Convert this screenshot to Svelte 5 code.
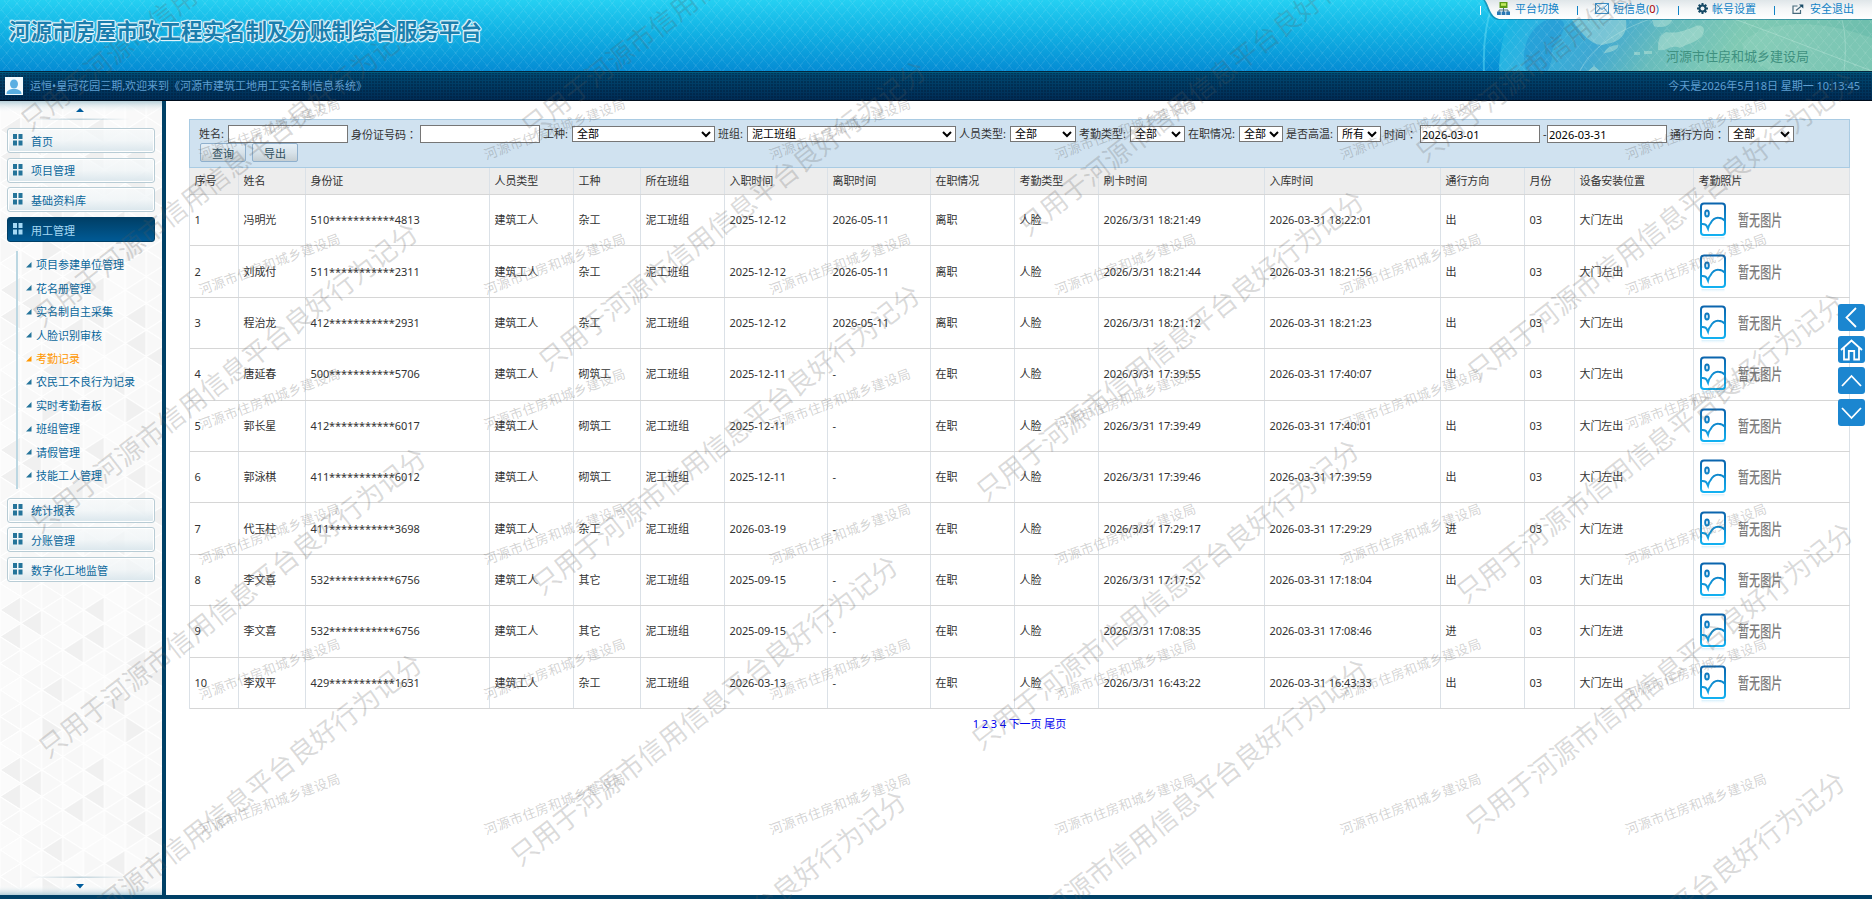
<script lang="ts">
  type Field = { label: string; lw: number; type: 'input' | 'select'; w: number; value: string };

  const title = '河源市房屋市政工程实名制及分账制综合服务平台';
  const bureau = '河源市住房和城乡建设局';
  const notice = '只用于河源市信用信息平台良好行为记分';

  let current = $state('考勤记录');

  const menuTop = ['首页', '项目管理', '基础资料库', '用工管理'];
  const menuBottom = ['统计报表', '分账管理', '数字化工地监管'];
  const subMenu = [
    '项目参建单位管理', '花名册管理', '实名制自主采集', '人脸识别审核', '考勤记录',
    '农民工不良行为记录', '实时考勤看板', '班组管理', '请假管理', '技能工人管理'
  ];

  const fields: Field[] = [
    { label: '姓名:', lw: 29, type: 'input', w: 120, value: '' },
    { label: '身份证号码：', lw: 69, type: 'input', w: 120, value: '' },
    { label: '工种:', lw: 29, type: 'select', w: 143, value: '全部' },
    { label: '班组:', lw: 29, type: 'select', w: 209, value: '泥工班组' },
    { label: '人员类型:', lw: 51, type: 'select', w: 66, value: '全部' },
    { label: '考勤类型:', lw: 51, type: 'select', w: 55, value: '全部' },
    { label: '在职情况:', lw: 51, type: 'select', w: 44, value: '全部' },
    { label: '是否高温:', lw: 51, type: 'select', w: 44, value: '所有' },
    { label: '时间：', lw: 36, type: 'input', w: 120, value: '2026-03-01' },
    { label: '-', lw: 4, type: 'input', w: 120, value: '2026-03-31' },
    { label: '通行方向：', lw: 58, type: 'select', w: 66, value: '全部' }
  ];

  const columns = [
    '序号', '姓名', '身份证', '人员类型', '工种', '所在班组', '入职时间', '离职时间', '在职情况',
    '考勤类型', '刷卡时间', '入库时间', '通行方向', '月份', '设备安装位置', '考勤照片'
  ];

  // 姓名, 证件前三位, 后四位, 工种, 入职, 离职, 刷卡, 入库, 方向
  const source = [
    ['冯明光', '510', '4813', '杂工', '2025-12-12', '2026-05-11', '18:21:49', '18:22:01', '出'],
    ['刘成付', '511', '2311', '杂工', '2025-12-12', '2026-05-11', '18:21:44', '18:21:56', '出'],
    ['程治龙', '412', '2931', '杂工', '2025-12-12', '2026-05-11', '18:21:12', '18:21:23', '出'],
    ['唐延春', '500', '5706', '砌筑工', '2025-12-11', '-', '17:39:55', '17:40:07', '出'],
    ['郭长星', '412', '6017', '砌筑工', '2025-12-11', '-', '17:39:49', '17:40:01', '出'],
    ['郭泳棋', '411', '6012', '砌筑工', '2025-12-11', '-', '17:39:46', '17:39:59', '出'],
    ['代玉柱', '411', '3698', '杂工', '2026-03-19', '-', '17:29:17', '17:29:29', '进'],
    ['李文喜', '532', '6756', '其它', '2025-09-15', '-', '17:17:52', '17:18:04', '出'],
    ['李文喜', '532', '6756', '其它', '2025-09-15', '-', '17:08:35', '17:08:46', '进'],
    ['李双平', '429', '1631', '杂工', '2026-03-13', '-', '16:43:22', '16:43:33', '出']
  ];

  const rows = source.map(([name, head, tail, job, joined, left, swipe, saved, dir], i) => [
    String(i + 1), name, head + '*'.repeat(11) + tail, '建筑工人', job, '泥工班组', joined, left,
    left === '-' ? '在职' : '离职', '人脸', '2026/3/31 ' + swipe, '2026-03-31 ' + saved, dir, '03', '大门左' + dir
  ]);

  // 大号水印的位置是错开的
  const notices = [
    [19, 134], [31, 330], [29, 536], [37, 761], [33, 967],
    [520, 140], [537, 374], [531, 598], [509, 869], [517, 1104],
    [1017, 239], [975, 504], [970, 753], [979, 972],
    [1414, 165], [1466, 385], [1455, 606], [1464, 836], [1456, 1085]
  ];

  const stamps: number[][] = [];
  for (let r = 0; r < 6; r++) {
    for (let c = 0; c < 6; c++) stamps.push([198 + c * 285.3, 162 + r * 135]);
  }

  // 侧栏背景三角形
  const TW = 20.9;
  const TH = 26.67;
  const darkOnes = ['0-0', '1-1', '4-0', '0-2', '4-2', '6-2', '3-3', '6-4', '2-9', '5-7', '7-5', '2-6', '6-9'];
  const triangles: { points: string; fill: string }[] = [];
  for (let i = 0; i < 8; i++) {
    for (let j = -1; j < 13; j++) {
      const x = i * TW;
      const y = (j * TH) / 2;
      const pointsLeft = (i + j) % 2 === 0;
      const k = (j + 12) % 12;
      const points = pointsLeft
        ? `${x},${y} ${x + TW},${y - TH / 2} ${x + TW},${y + TH / 2}`
        : `${x + TW},${y} ${x},${y - TH / 2} ${x},${y + TH / 2}`;
      const light = ['#fafafa', '#f9f9f9', '#f7f7f7', '#fbfbfb', '#f8f8f8'][(i * 7 + k * 3 + i * k) % 5];
      triangles.push({ points, fill: darkOnes.includes(`${i}-${k}`) ? '#f0f0f0' : light });
    }
  }
</script>

{#snippet menuButton(text: string)}
  <button class="menu-btn" class:open={text === '用工管理'}>
    <svg width="10" height="12" viewBox="0 0 10 12">
      <path d="M0 0h4v5H0zM5.5 0h4v5h-4zM0 6.5h4v5H0zM5.5 6.5h4v5h-4z" fill="currentColor" />
    </svg>
    {text}
  </button>
{/snippet}

<div class="page">
  <header>
    <h1>{title}</h1>
    <svg class="globe" width="392" height="71" viewBox="0 0 392 71">
      <defs>
        <linearGradient id="sea" x1="0" y1="0" x2="1" y2="0.12">
          <stop offset="0" stop-color="#12b4e2" stop-opacity="0" />
          <stop offset="0.06" stop-color="#18b6e4" />
          <stop offset="0.16" stop-color="#32b2e0" />
          <stop offset="0.33" stop-color="#3fa8d2" />
          <stop offset="0.5" stop-color="#68bcbc" />
          <stop offset="0.7" stop-color="#80cab4" />
          <stop offset="1" stop-color="#6fbfae" />
        </linearGradient>
        <radialGradient id="shine" cx="0.22" cy="0" r="0.3">
          <stop offset="0" stop-color="#c4f4fb" stop-opacity="0.75" />
          <stop offset="1" stop-color="#c4f4fb" stop-opacity="0" />
        </radialGradient>
      </defs>
      <path d="M19 71C19 45 28 20 36 0h356v71z" fill="url(#sea)" />
      <path d="M19 71C19 45 28 20 40 0h352v71z" fill="url(#shine)" />
      <path d="M4 71C3 45 6 20 14 0" fill="none" stroke="#5fdcf4" stroke-opacity="0.5" stroke-width="2" />
      <path d="M46 71c-6-22 2-40 18-50 14-4 22-2 20 8-6 14-14 18-12 30l-4 12z" fill="#1a8fd0" opacity="0.45" />
      <path d="M92 20h54c2 12-4 22-20 24-10 4-22-6-34-24zM124 53c2-5 8-8 14-8 2 4-8 8-14 8zM172 20h20c-2 8-14 8-18 6zM178 50c0-8 0-14 8-18 12 2 20-2 30-6 8-2 10 4 6 10-8 8-16 8-22 12-10-4-12 4-22 2zM154 52h6v3h-6zM164 51h8v3h-8zM114 66l6 5h-12z" fill="#c8ecdc" opacity="0.42" />
      <path d="M262 44c16-20 60-26 112-12l18 6v33H290c-10-8-26-14-28-27z" fill="#a4dcc6" opacity="0.25" />
      <path d="M362 20c4 14 4 34 2 51M100 71c14-30 60-60 160-71M200 0c60 20 110 40 192 71" fill="none" stroke="#d8f4ea" stroke-opacity="0.3" />
    </svg>
    <div class="mesh"></div>
    <span class="bureau">{bureau}</span>
    <div class="tools">
      <svg class="tab" width="391" height="22" viewBox="0 0 391 22">
        <defs>
          <linearGradient id="tab" x1="0" y1="0" x2="0" y2="1">
            <stop offset="0" stop-color="#dfe6e9" />
            <stop offset="0.45" stop-color="#f4f6f7" />
            <stop offset="1" stop-color="#ffffff" />
          </linearGradient>
        </defs>
        <path d="M2 0C6 4 7 18 17 20H391V0z" fill="#0b6f94" opacity="0.55" />
        <path d="M4 0C8 5 9 17 18 19H391V0z" fill="url(#tab)" />
      </svg>
      <i class="bar first"></i>
      <a href="#switch" class="t1">
        <svg width="13" height="13" viewBox="0 0 13 13">
          <path d="M2.5 0h8v6h-8z" fill="#5c9c14" /><path d="M4 1.2h5v2.6H4z" fill="#c2e860" />
          <path d="M6.5 6v4M2 10V8h9v2" stroke="#47717f" fill="none" />
          <path d="M0 9.5h3.8V13H0zM4.6 9.5h3.8V13H4.6zM9.2 9.5H13V13H9.2z" fill="#2a78b4" />
        </svg>平台切换</a>
      <i class="bar"></i>
      <a href="#message" class="t2">
        <svg width="14" height="11" viewBox="0 0 14 11" fill="none" stroke="#3c8fc6">
          <rect x="0.5" y="0.5" width="13" height="10" fill="#eaf5fb" />
          <path d="M0.5 0.5 7 6.5l6.500-6M.5 10.500l4.500-5.500M13.500 10.500 9 5" />
        </svg><span>短信息(<b>0</b>)</span></a>
      <i class="bar"></i>
      <a href="#account" class="t3">
        <svg width="11" height="11" viewBox="0 0 11 11">
          <g stroke="#174a66" stroke-width="2">
            <path d="M5.500 0v11M0 5.500h11M1.700 1.700l7.600 7.600M9.300 1.700 1.700 9.300" />
          </g>
          <circle cx="5.500" cy="5.500" r="4" fill="#174a66" /><circle cx="5.500" cy="5.500" r="2" fill="#f4f6f7" />
        </svg>帐号设置</a>
      <i class="bar"></i>
      <a href="#exit" class="t4">
        <svg width="12" height="10" viewBox="0 0 12 10" fill="none" stroke="#466a7c" stroke-width="1.200">
          <path d="M5.500 2H1v7.400h7.500V6M4 6.500 10 1.500" /><path d="M7 .6h4.300v3.900z" fill="#174a66" stroke="none" />
        </svg>安全退出</a>
    </div>
  </header>

  <div class="status">
    <svg width="18" height="18" viewBox="0 0 18 18">
      <rect width="18" height="18" fill="#f2fafe" />
      <ellipse cx="9" cy="7" rx="4" ry="4.600" fill="#5aaee2" />
      <path d="M1.500 17c0-3.500 3-4.500 5.500-5h4c2.500.5 5.500 1.500 5.500 5z" fill="#5aaee2" />
    </svg>
    <span>运恒•皇冠花园三期,欢迎来到《河源市建筑工地用工实名制信息系统》</span>
    <span class="clock">今天是2026年5月18日 星期一 10:13:45</span>
  </div>

  <div class="body">
    <aside>
      <svg class="bg" width="162" height="794">
        <defs>
          <pattern id="tri" width="167.200" height="160" y="29" patternUnits="userSpaceOnUse">
            {#each triangles as t}
              <polygon points={t.points} fill={t.fill} stroke="#fff" stroke-width="1" />
            {/each}
          </pattern>
          <linearGradient id="fadeTop" x1="0" y1="0" x2="0" y2="1">
            <stop offset="0" stop-color="#b5cfd9" /><stop offset="1" stop-color="#fff" stop-opacity="0" />
          </linearGradient>
          <linearGradient id="hair" x1="0" y1="0" x2="1" y2="0">
            <stop offset="0" stop-color="#a9c4d0" stop-opacity="0" />
            <stop offset="0.5" stop-color="#a9c4d0" stop-opacity="0.7" /><stop offset="1" stop-color="#a9c4d0" stop-opacity="0" />
          </linearGradient>
        </defs>
        <rect width="162" height="794" fill="url(#tri)" />
        <rect width="162" height="12" fill="url(#fadeTop)" />
        <rect width="162" height="10" fill="url(#fadeTop)" transform="translate(0 794) scale(1 -1)" />
        <rect x="30" y="17.500" width="100" height="1.500" fill="url(#hair)" />
        <rect x="30" y="775.500" width="100" height="1.500" fill="url(#hair)" />
        <path d="M76 11l4-4 4 4zM76 783h8l-4 4.500z" fill="#005c9c" />
      </svg>
      <nav>
        {#each menuTop as item}{@render menuButton(item)}{/each}
        <ul>
          {#each subMenu as item}
            <li class:active={item === current}>
              <svg width="6" height="6" viewBox="0 0 6 6"><path d="M0 5.500 5.500 0v5.500z" fill="currentColor" /></svg>
              <a href="#{item}" onclick={() => (current = item)}>{item}</a>
            </li>
          {/each}
        </ul>
        {#each menuBottom as item}{@render menuButton(item)}{/each}
      </nav>
    </aside>

    <main>
      <form class="filter" onsubmit={(e) => e.preventDefault()}>
        <div class="fields">
          {#each fields as f}
            <label>
              <span class:wide={f.label.endsWith('：')} style:width="{f.lw}px">{f.label}</span>
              {#if f.type === 'input'}
                <input type="text" value={f.value} style:width="{f.w}px" />
              {:else}
                <select style:width="{f.w}px"><option>{f.value}</option></select>
              {/if}
            </label>
          {/each}
        </div>
        <div class="actions">
          <button type="submit">查询</button>
          <button type="button">导出</button>
        </div>
      </form>

      <table>
        <thead>
          <tr>{#each columns as c}<th>{c}</th>{/each}</tr>
        </thead>
        <tbody>
          {#each rows as row}
            <tr>
              {#each row as cell}<td>{cell}</td>{/each}
              <td class="photo">
                <svg width="28" height="40" viewBox="0 0 28 40">
                  <defs>
                    <linearGradient id="pic" x1="0" y1="0" x2="0" y2="34" gradientUnits="userSpaceOnUse">
                      <stop offset="0" stop-color="#0b62ab" /><stop offset="1" stop-color="#12b2f2" />
                    </linearGradient>
                    <linearGradient id="mirror" x1="0" y1="0" x2="0" y2="1">
                      <stop offset="0" stop-color="#d4effc" /><stop offset="1" stop-color="#fff" stop-opacity="0" />
                    </linearGradient>
                  </defs>
                  <g fill="none" stroke="url(#pic)" stroke-width="2">
                    <rect x="2" y="1.500" width="24" height="31.500" rx="3" />
                    <ellipse cx="8" cy="11.500" rx="1.800" ry="3" />
                    <path d="M2 22c3-.4 5.200.4 5.800 2.200l1.200 2.600c.6-3 1-4 2.400-5.400 2.200-4 5-5.800 8-5.600 3 0 5 1.200 6.600 3.200" />
                  </g>
                  <rect x="2.500" y="35" width="23" height="4" fill="url(#mirror)" />
                </svg>
                <span>暂无图片</span>
              </td>
            </tr>
          {/each}
        </tbody>
      </table>

      <div class="pager">
        {#each ['1', '2', '3', '4', '下一页', '尾页'] as p}<a href="#{p}">{p}</a>{/each}
      </div>
    </main>
  </div>

  <svg class="marks" width="1872" height="899">
    {#each notices as [x, y]}
      <text class="big" transform="translate({x + 11} {y - 2}) rotate(-38)">{notice}</text>
    {/each}
    {#each stamps as [x, y]}
      <text class="small" transform="translate({x + 3} {y - 2}) rotate(-20.500)">{bureau}</text>
    {/each}
  </svg>

  <div class="float">
    <button aria-label="收起"><svg viewBox="0 0 27 27"><path d="M18 4 8.500 13.500 18 23" /></svg></button>
    <button aria-label="首页">
      <svg viewBox="0 0 27 27"><path d="M3 14 13.500 4.500 24 14M6 12v11.500h4.800V15h5.400v8.500H21V12" /></svg>
    </button>
    <button aria-label="向上"><svg viewBox="0 0 27 27"><path d="M4 19 13.500 9 23 19" /></svg></button>
    <button aria-label="向下"><svg viewBox="0 0 27 27"><path d="M4 9l9.500 10L23 9" /></svg></button>
  </div>
</div>

<style>
  :global(body) { margin: 0; overflow: hidden; }

  .page {
    position: relative;
    width: 1872px;
    height: 899px;
    overflow: hidden;
    display: flex;
    flex-direction: column;
    background: #fff;
    color: #333;
    font: 11px/14px 'Noto Sans', 'Noto Sans CJK SC', sans-serif;
  }

  .page * { box-sizing: border-box; }
  a { color: inherit; text-decoration: none; }
  button, input, select { font-family: inherit; font-size: 11px; }

  header {
    position: relative;
    height: 71px;
    flex: none;
    background: linear-gradient(#25d0f2, #12b2e4 45%, #058cd4);
  }

  .globe { position: absolute; right: 0; top: 0; }

  .mesh {
    position: absolute;
    inset: 0;
    background:
      repeating-linear-gradient(50deg, rgba(255, 255, 255, 0.07) 0 1px, transparent 1px 8px),
      repeating-linear-gradient(-50deg, rgba(255, 255, 255, 0.07) 0 1px, transparent 1px 8px);
  }

  h1 {
    position: relative;
    z-index: 1;
    margin: 0;
    padding: 16px 0 0 9px;
    font-size: 21.5px;
    line-height: 30px;
    font-weight: 700;
    color: #1a7fae;
    text-shadow: 1px 0 #dff4fb, -1px 0 #dff4fb, 0 1px #dff4fb, 0 -1px #dff4fb, 1px 1px 1px #dff4fb, -1px -1px 1px #dff4fb, 0 0 2px #dff4fb;
  }

  .bureau {
    position: absolute;
    right: 63px;
    top: 47px;
    font-size: 13px;
    line-height: 18px;
    color: #3f9180;
  }

  .tools {
    position: absolute;
    right: 0;
    top: 0;
    width: 393px;
    height: 19px;
    display: flex;
    align-items: center;
    color: #1183c6;
    line-height: 15px;
  }

  .tools .tab { position: absolute; right: 0; top: 0; }
  .tools a { position: relative; display: flex; align-items: center; height: 15px; margin-bottom: 2px; }
  .bar { position: relative; width: 1px; height: 9px; margin-top: 2px; background: #1183c6; }
  .bar.first { background: #fff; margin-left: 1px; }
  .t1 { gap: 5px; margin-left: 16px; margin-right: 18px; }
  .t2 { gap: 4px; margin-left: 17px; margin-right: 19px; }
  .t3 { gap: 4px; margin-left: 18px; margin-right: 18px; }
  .t4 { gap: 6px; margin-left: 17px; }
  .t2 b { color: #a00; font-weight: 400; }

  .status {
    height: 30px;
    flex: none;
    display: flex;
    align-items: center;
    padding: 0 12px 0 5px;
    gap: 7px;
    color: #5f9fd2;
    border-top: 1px solid #04263e;
    border-bottom: 1px solid #000d1c;
    box-shadow: inset 0 1px #005d80;
    background:
      radial-gradient(circle at 1px 1px, rgba(0, 15, 40, 0.3) 0.8px, transparent 1px) 0 0 / 3px 3px,
      linear-gradient(#004a72, #002c55);
  }

  .clock { margin-left: auto; letter-spacing: -0.03px; }

  .body {
    flex: 1;
    display: flex;
    min-height: 0;
    border-bottom: 4px solid #004066;
  }

  aside { position: relative; width: 166px; border-right: 4px solid #004066; }
  .bg { position: absolute; left: 0; top: 0; }
  nav { position: relative; display: flex; flex-direction: column; padding: 27px 7px 0; }

  .menu-btn {
    display: flex;
    align-items: center;
    gap: 8px;
    width: 148px;
    height: 25px;
    margin-bottom: 4.7px;
    padding: 0 0 0 5px;
    border: 1px solid #b8ccd5;
    border-radius: 3px;
    box-shadow: inset 0 0 0 1px #fff;
    background: linear-gradient(rgba(246, 249, 250, 0.7), rgba(240, 245, 247, 0.8) 50%, #dae6ec);
    color: #0a679b;
    text-align: left;
  }

  .menu-btn svg { color: #24749a; margin-bottom: 1px; }
  .menu-btn.open { background: linear-gradient(#003f66, #005a95); border-color: #003f66; color: #a5d8f4; box-shadow: none; }
  .menu-btn.open svg { color: #a5d8f4; }

  ul {
    list-style: none;
    margin: 4px 0 9px 9px;
    padding: 3px 0 1px 8px;
    border-left: 2px solid #bcd7e2;
    height: 238px;
  }

  li { display: flex; align-items: center; gap: 4px; height: 23.4px; color: #0a679b; }
  li svg { color: #24749a; margin-bottom: 1px; }
  li.active, li.active svg { color: #ff9700; }

  main { flex: 1; padding: 18px 22px 0 23px; }

  .filter {
    height: 49px;
    border: 1px solid #a9cbe3;
    background: #d0e2f0;
    padding: 5px 0 0 9px;
  }

  .fields { display: flex; gap: 3px; height: 18px; align-items: center; }
  .fields label { display: flex; align-items: center; white-space: nowrap; height: 18px; }
  .fields span { flex: none; }
  .fields .wide { font-family: 'Noto Sans CJK TC', 'Noto Sans CJK SC', sans-serif; }
  .fields input { height: 18px; padding: 0 1px; border: 1px solid #767676; outline: 0; color: #000; background: #fff; }

  .fields select {
    height: 16px;
    padding: 0;
    border: 1px solid #767676;
    border-radius: 0;
    background: #fff;
    color: #000;
    font-family: 'Liberation Sans', 'Noto Sans CJK SC', sans-serif;
    line-height: 14px;
  }

  .actions { display: flex; gap: 6px; padding-left: 1px; }

  .actions button {
    width: 46px;
    height: 19px;
    padding: 0;
    border: 1px solid #8fb0cd;
    border-radius: 2px;
    background: linear-gradient(#e4eff7, #d8e3ea 50%, #c5ced3);
    color: #2f5060;
  }

  table { display: block; border-left: 1px solid #dbe1e7; }
  thead, tbody { display: block; }

  tr {
    display: grid;
    grid-template-columns: 49px 67px 184px 84px 67px 84px 103px 103px 84px 84px 166px 176px 84px 50px 119px 156px;
    height: 51.4px;
    border-bottom: 1px solid #d6d6d6;
  }

  thead tr { height: 27.1px; background: #ededed; }

  th, td {
    display: flex;
    align-items: center;
    padding: 0 0 0 4.500px;
    border-right: 1px solid #dbe1e7;
    font-weight: 400;
    letter-spacing: -0.09px;
    white-space: nowrap;
  }

  .photo { padding-left: 5px; gap: 11px; }
  .photo svg { margin-top: 4px; }
  .photo span { color: #7c7c7c; font-weight: 500; transform: scaleY(1.4); letter-spacing: 0.1px; }

  .pager { display: flex; justify-content: center; gap: 2.700px; padding-top: 8px; color: #00e; }

  .marks { position: absolute; left: 0; top: 0; pointer-events: none; font-family: 'Noto Sans CJK SC', sans-serif; }
  .big { font-size: 26.67px; letter-spacing: 0.2px; fill: rgba(90, 90, 90, 0.22); }
  .small { font-size: 13.33px; letter-spacing: 0.3px; fill: rgba(90, 90, 90, 0.27); }

  .float { position: absolute; right: 7px; top: 304px; display: flex; flex-direction: column; gap: 4.700px; }
  .float button { width: 27px; height: 27px; padding: 0; border: 0; border-radius: 3px; background: #1b86d0; }
  .float svg { display: block; width: 27px; height: 27px; fill: none; stroke: #fff; stroke-width: 1.800; }
</style>
